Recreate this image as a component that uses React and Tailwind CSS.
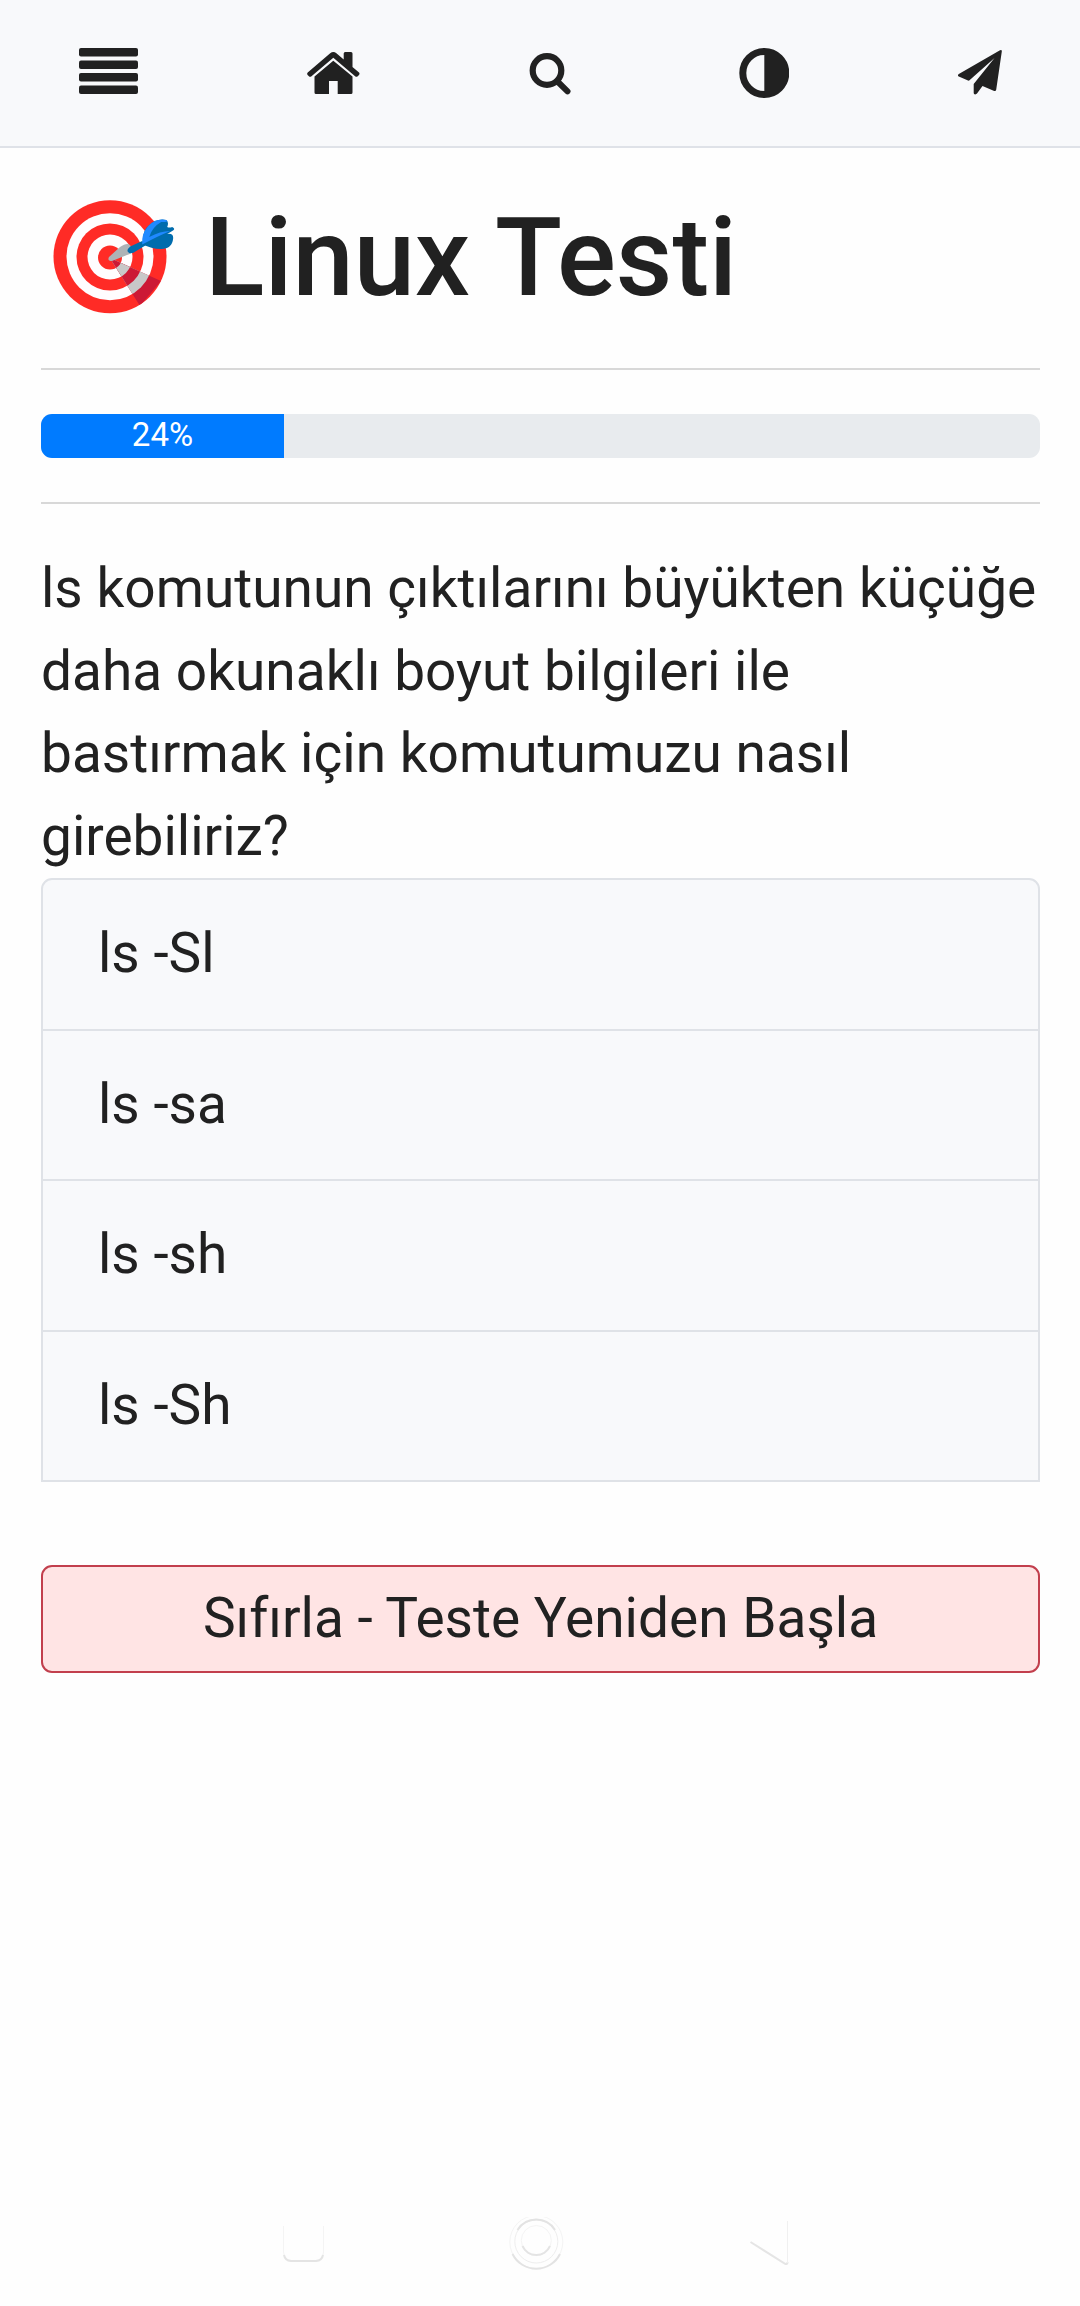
import React from 'react';

const answers = [
  { text: 'ls -Sl', height: 'h-[151px]' },
  { text: 'ls -sa', height: 'h-[150px]' },
  { text: 'ls -sh', height: 'h-[151px]' },
  { text: 'ls -Sh', height: 'h-[148px]' },
];

function MenuIcon() {
  return (
    <svg className="h-[46px] w-[59px]" viewBox="0 0 59 46" fill="#212121">
      <rect y="0" width="59" height="8.5" rx="2" />
      <rect y="12.5" width="59" height="8.5" rx="2" />
      <rect y="25" width="59" height="8.5" rx="2" />
      <rect y="37.5" width="59" height="8.5" rx="2" />
    </svg>
  );
}

function HomeIcon() {
  return (
    <svg className="h-[42px] w-[53px]" viewBox="0 0 53 42" fill="#212121">
      <path d="M26.300 8.700 45.500 24.500V40.500Q45.500 42 44 42H30.700V29H22V42H9Q7.500 42 7.500 40.500V24.500Z" />
      <path d="M.7 20.500 23.200 1.300Q26.300 -1.300 29.400 1.300L36.700 7.500V1.500Q36.700 0 38.200 0H44Q45.500 0 45.500 1.500V15L52 20.500Q53 21.700 52 22.900L50.700 24.300Q49.500 25.300 48.400 24.400L26.300 5.700 4.200 24.400Q3 25.300 1.900 24.300L.6 22.900Q-.4 21.700 .7 20.500Z" />
    </svg>
  );
}

function SearchIcon() {
  return (
    <svg className="h-[42px] w-[42px]" viewBox="0 0 42 42" fill="none" stroke="#212121">
      <circle cx="18" cy="17.500" r="14.300" strokeWidth="6.200" />
      <path d="m29 29 9.500 9.300" strokeWidth="6" strokeLinecap="round" />
    </svg>
  );
}

function ContrastIcon() {
  return (
    <svg className="h-[50px] w-[50px]" viewBox="0 0 50 50">
      <circle cx="25.300" cy="25" r="21.500" fill="none" stroke="#212121" strokeWidth="7" />
      <path d="M25.300 2a23 23 0 0 1 0 46Z" fill="#212121" />
    </svg>
  );
}

function PlaneIcon() {
  return (
    <svg className="h-[45px] w-[44px]" viewBox="0 0 44 45" fill="#212121">
      <path d="M42 .3Q44 -.6 43.800 1.500L38.200 39.800Q37.900 41.500 36.200 41L24.500 36 19 43.500Q16.500 45.500 15.700 43.300V34L36.500 8 11.500 30.200Q11 30.900 10 30.500L.8 26.500Q-1 25.300 .8 24.100Z" />
    </svg>
  );
}

function TargetIcon() {
  return (
    <svg className="ml-[12px] h-[114px] w-[122px]" viewBox="0 0 122 114">
      <defs>
        <clipPath id="shadow"><path d="M57 58 108 81 87 106Z" /></clipPath>
      </defs>
      <circle cx="57" cy="56.700" r="56.500" fill="#ff2b26" />
      <circle cx="57" cy="56.700" r="43.500" fill="#fffdfe" />
      <circle cx="57" cy="57" r="33.500" fill="#ff2b26" />
      <circle cx="57" cy="57" r="22.500" fill="#fffdfe" />
      <circle cx="57" cy="57.500" r="12" fill="#ff2b26" />
      <g clipPath="url(#shadow)">
        <circle cx="57" cy="56.700" r="56.500" fill="#cc1935" />
        <circle cx="57" cy="56.700" r="43.500" fill="#c8c8c8" />
        <circle cx="57" cy="57" r="33.500" fill="#cc1935" />
        <circle cx="57" cy="57" r="22.500" fill="#c8c8c8" />
        <circle cx="57" cy="57.500" r="12" fill="#cc1935" />
      </g>
      <path d="M56 57 67 47Q74 42 77 45L80 50Q79 54 74 55L59 61Q54 61 56 57Z" fill="#aeb3b6" />
      <g transform="translate(1.200 0)">
        <path d="M88 41 76 46.500Q71 51 75 53Q78 54 82 51L92 45Z" fill="#006cad" />
        <path d="M89 42Q88 31 94 26Q102 18 112 20Q115 22 113 27Q115 28 118 27Q122 29 118 31L113 34Q119 33 119 38Q118 49 107 49Q97 49 88 44Z" fill="#006cad" />
        <path d="M88 44.500Q87 34 94 26Q102 18 112 20Q116 22 107 22Q98 27 95 37Q106 31 116 31Q104 36 88 44.500Z" fill="#2089ff" />
      </g>
    </svg>
  );
}

function NavHints() {
  return (
    <svg className="h-[56px] w-[508px]" viewBox="0 0 508 56" fill="none">
      <path d="M.5 9V35Q1 43 8 43.500H33Q40 43 40.500 35V9" stroke="#f4f4f4" strokeWidth="1" />
      <path d="M1 38Q2 43.500 8 44H33Q39 43.500 40 38" stroke="#e4e4e4" strokeWidth="2" />
      <circle cx="253.300" cy="25" r="26.500" stroke="#f4f4f4" strokeWidth="1" />
      <path d="M229.500 37A26.500 26.500 0 0 0 277 37" stroke="#e3e3e3" strokeWidth="2" />
      <circle cx="253.300" cy="24.500" r="21.500" stroke="#eeeeee" strokeWidth="1" />
      <path d="M234.500 13A22 22 0 0 1 272 13" stroke="#e3e3e3" strokeWidth="2" />
      <circle cx="253.300" cy="23.500" r="15" stroke="#f4f4f4" strokeWidth="1" />
      <path d="M239.500 29A15 15 0 0 0 267 29" stroke="#e4e4e4" strokeWidth="2" />
      <path d="m467.500 25 35 22Q504.500 47.500 504.500 45" stroke="#e5e5e5" strokeWidth="2" />
      <path d="M504.500 4V46" stroke="#f0f0f0" strokeWidth="1" />
    </svg>
  );
}

export default function App() {
  return (
    <div className="flex min-h-[2306px] w-[1080px] flex-col bg-[#fefefe] font-[Roboto,sans-serif] text-[#212121]">
      <header className="flex h-[148px] items-start justify-between border-b-2 border-[#dfe2e8] bg-[#f8f9fb] pr-[78px] pl-[79px]">
        <button className="mt-[48px]"><MenuIcon /></button>
        <button className="mt-[52px]"><HomeIcon /></button>
        <button className="mt-[53px]"><SearchIcon /></button>
        <button className="mt-[48px]"><ContrastIcon /></button>
        <button className="mt-[50px]"><PlaneIcon /></button>
      </header>
      <main className="pr-[40px] pl-[41px]">
        <div className="flex h-[222px] items-start border-b-2 border-[#d8d8d8] pt-[50px]">
          <div className="pt-[2px]"><TargetIcon /></div>
          <h1 className="ml-[30px] text-[110px] leading-[120px] font-medium whitespace-nowrap">Linux Testi</h1>
        </div>
        <div className="mt-[44px] h-[44px] overflow-hidden rounded-[11px] bg-[#e8ebee]">
          <div className="flex h-full w-[243px] items-center justify-center bg-[#007bff] pb-[3px] text-[33px] leading-none text-white">24%</div>
        </div>
        <hr className="mt-[44px] border-t-2 border-[#d8d8d8]" />
        <p className="mt-[43px] text-[55px] leading-[82.500px] whitespace-nowrap">
          ls komutunun çıktılarını büyükten küçüğe<br />daha okunaklı boyut bilgileri ile<br />bastırmak için komutumuzu nasıl<br />girebiliriz?
        </p>
        <ul className="mt-px overflow-hidden rounded-t-[11px] border-2 border-[#dfe2e7] bg-[#f8f9fb]">
          {answers.map(({ text, height }) => (
            <li key={text} className={`${height} border-b-2 border-[#dfe2e7] pt-[32px] pl-[55px] text-[55px] leading-[82px] last:border-b-0`}>{text}</li>
          ))}
        </ul>
        <button className="mt-[83px] flex h-[108px] w-full items-center justify-center rounded-[11px] border-2 border-[#c23f4d] bg-[#ffe4e4] pb-[2px] text-[55px]">Sıfırla - Teste Yeniden Başla</button>
      </main>
      <footer className="mt-auto mb-[33px] ml-[283px]"><NavHints /></footer>
    </div>
  );
}
